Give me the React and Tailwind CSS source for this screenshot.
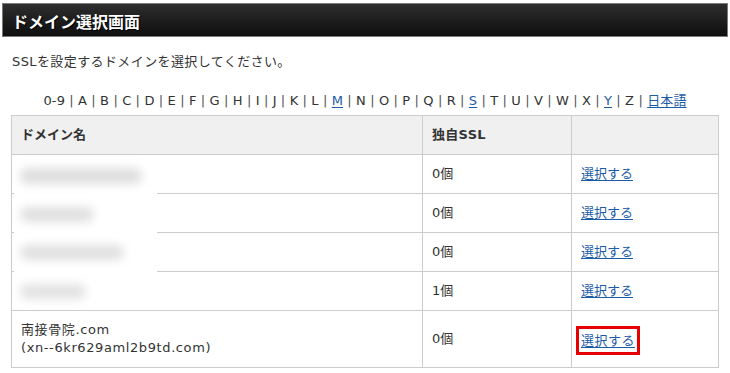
import React from "react";

const letters = ["0-9","A","B","C","D","E","F","G","H","I","J","K","L","M","N","O","P","Q","R","S","T","U","V","W","X","Y","Z","日本語"];
const linked = new Set(["M","S","Y","日本語"]);

const rows = [
  { ssl: "0個" },
  { ssl: "0個" },
  { ssl: "0個" },
  { ssl: "1個" },
];

function Link({ children }) {
  return <a href="#" className="text-[#1d5ba6] underline underline-offset-2">{children}</a>;
}

export default function App() {
  return (
    <div
      className="relative w-[730px] h-[373px] bg-white overflow-hidden text-[13px] text-[#333]"
      style={{ fontFamily: '"DejaVu Sans", "Noto Sans CJK JP", sans-serif' }}
    >
      <div className="mx-[2px] mt-[3px] h-[34px] border border-[#7a7a7a] bg-gradient-to-b from-[#2e2e2e] to-[#0f0f0f] flex items-center px-[9px]">
        <span
          className="text-white font-bold text-[16px] leading-none mt-[1px]"
          style={{ textShadow: "1px 1px 0 #000", fontFamily: '"Noto Sans CJK JP", sans-serif' }}
        >
          ドメイン選択画面
        </span>
      </div>

      <p className="mt-[16px] px-[12px] leading-[18px] tracking-[0.4px]">SSLを設定するドメインを選択してください。</p>

      <div className="mt-[21px] text-center leading-[18px] tracking-[0.12px]">
        {letters.map((l, i) => (
          <React.Fragment key={l}>
            {linked.has(l) ? <Link>{l}</Link> : <span>{l}</span>}
            {i < letters.length - 1 && <span className="text-[#555]"> | </span>}
          </React.Fragment>
        ))}
      </div>

      <table className="mt-[5px] ml-[11px] w-[707px] border-collapse table-fixed">
        <colgroup>
          <col className="w-[411px]" />
          <col className="w-[149px]" />
          <col className="w-[147px]" />
        </colgroup>
        <thead>
          <tr className="h-[39px] bg-[#f0f0f0]">
            <th className="border border-[#cccccc] text-left font-semibold px-[9px]">ドメイン名</th>
            <th className="border border-[#cccccc] text-left font-bold px-[9px] tracking-[0.3px]">独自SSL</th>
            <th className="border border-[#cccccc]"></th>
          </tr>
        </thead>
        <tbody>
          {rows.map((r, i) => (
            <tr key={i} className="h-[39px]">
              <td className="border border-[#cccccc] px-[9px]"></td>
              <td className="border border-[#cccccc] px-[9px]">{r.ssl}</td>
              <td className="border border-[#cccccc] px-[9px]"><Link>選択する</Link></td>
            </tr>
          ))}
          <tr className="h-[57px]">
            <td className="border border-[#cccccc] px-[9px] leading-[18px] tracking-[0.6px]">
              南接骨院.com<br />(xn--6kr629aml2b9td.com)
            </td>
            <td className="border border-[#cccccc] px-[9px]">0個</td>
            <td className="border border-[#cccccc] px-[4px]">
              <span className="inline-block border-[3px] border-[#e60000] px-[2px] pt-[3px] pb-[2px] leading-[18px] tracking-[0.5px] mt-[3px]">
                <Link>選択する</Link>
              </span>
            </td>
          </tr>
        </tbody>
      </table>

      <div className="absolute left-[14px] top-[159px] w-[143px] h-[147px] bg-white overflow-hidden">
        <div className="absolute left-[6px] top-[9px] w-[122px] h-[16px] rounded-full bg-[#dedede] blur-[5px]" />
        <div className="absolute left-[6px] top-[48px] w-[74px] h-[15px] rounded-full bg-[#e0e0e0] blur-[5px]" />
        <div className="absolute left-[6px] top-[86px] w-[104px] h-[15px] rounded-full bg-[#e0e0e0] blur-[5px]" />
        <div className="absolute left-[6px] top-[125px] w-[66px] h-[15px] rounded-full bg-[#e2e2e2] blur-[5px]" />
      </div>
    </div>
  );
}
